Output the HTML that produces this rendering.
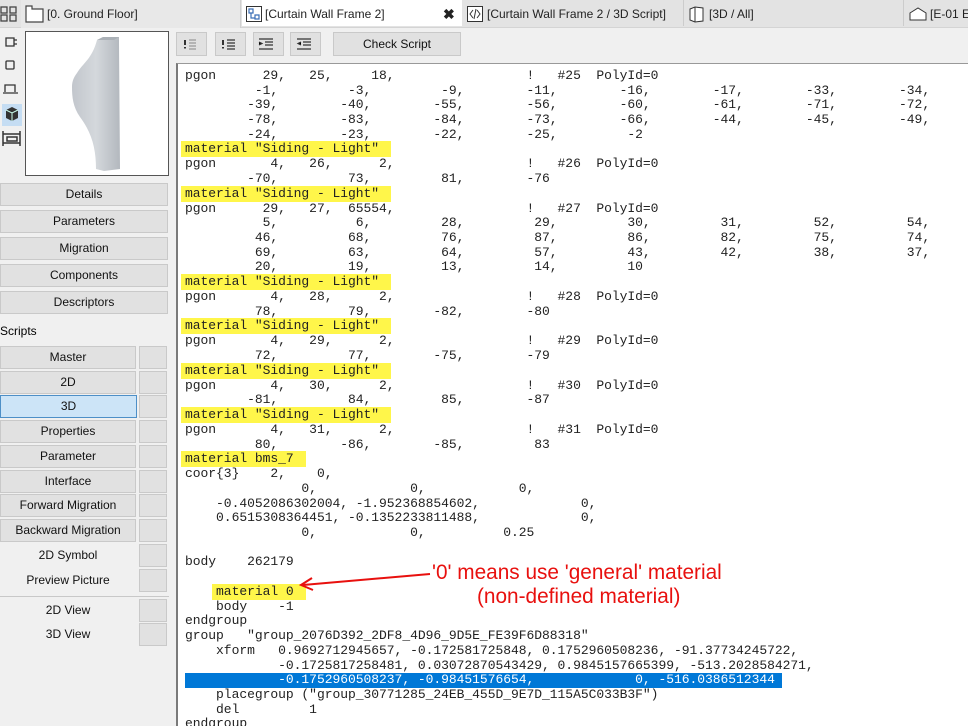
<!DOCTYPE html>
<html><head><meta charset="utf-8"><style>
*{margin:0;padding:0;box-sizing:border-box}
body{width:968px;height:726px;overflow:hidden;background:#f0f0f0;font-family:"Liberation Sans",sans-serif;font-size:12px;color:#000;position:relative}
.abs{position:absolute}
.tabbar{left:0;top:0;width:968px;height:28px;background:#e3e3e3;border-bottom:1px solid #d4d4d4}
.tab{position:absolute;top:0;height:28px;line-height:28px;font-size:12px;color:#222;white-space:nowrap}
.btn{position:absolute;background:#e1e1e1;border:1px solid #c9c9c9;text-align:center;font-size:12px;line-height:21px;height:23px;color:#111}
.sq{position:absolute;left:139px;width:28px;height:23px;background:#e1e1e1;border:1px solid #c9c9c9}
.code{left:176px;top:63px;width:792px;height:663px;background:#fff;border-left:2px solid #7a7a7a;border-top:1px solid #999;overflow:hidden}
pre{position:absolute;left:7px;top:5px;font-family:"Liberation Mono",monospace;font-size:13px;line-height:14.67px;color:#222;letter-spacing:-0.04px}
.hl{background:#fff64a;display:inline-block;margin-left:-4px;padding:0 12px 0 4px;height:16px;line-height:16px;margin-top:-1px;vertical-align:top}
.sel{background:#0078d7;color:#fff;display:inline-block;width:597px;vertical-align:top}
.tb{position:absolute;top:32px;width:31px;height:24px;background:#e1e1e1;border:1px solid #c9c9c9}
.ann{color:#e8100e;font-family:"Liberation Sans Narrow","Liberation Sans",sans-serif;font-size:21px;position:absolute;white-space:nowrap;transform:scaleX(0.99);transform-origin:left}
</style></head><body>
<div class="abs tabbar"></div>
<svg class="abs" style="left:0;top:6px" width="18" height="16"><g fill="none" stroke="#444" stroke-width="1.3"><rect x="1" y="1" width="6" height="6"/><rect x="10" y="1" width="6" height="6"/><rect x="1" y="9" width="6" height="6"/><rect x="10" y="9" width="6" height="6"/></g></svg>
<div class="abs" style="left:21px;top:0;width:220px;height:28px;background:#e8e8e8;border-right:1px solid #d0d0d0"></div>
<svg class="abs" style="left:25px;top:5px" width="20" height="18"><path d="M1 1h6v3h11v13H1z" fill="#fff" stroke="#444" stroke-width="1.2"/></svg>
<div class="tab" style="left:47px">[0. Ground Floor]</div>
<div class="abs" style="left:242px;top:0;width:220px;height:26px;background:#fff"></div>
<svg class="abs" style="left:246px;top:6px" width="16" height="16"><rect x="0.5" y="0.5" width="15" height="15" fill="#fff" stroke="#333"/><path d="M3 3h4v4H3zM9 9h4v4H9zM5 7v5h4" fill="none" stroke="#3b6fb6" stroke-width="1.2"/></svg>
<div class="tab" style="left:265px">[Curtain Wall Frame 2]</div>
<div class="tab" style="left:443px;font-weight:bold;font-size:14px">✖</div>
<svg class="abs" style="left:467px;top:6px" width="16" height="16"><rect x="0.5" y="0.5" width="15" height="15" fill="#fff" stroke="#333"/><path d="M6 4L3 8l3 4M10 4l3 4-3 4M9 3L7 13" fill="none" stroke="#333"/></svg>
<div class="tab" style="left:487px">[Curtain Wall Frame 2 / 3D Script]</div>
<div class="abs" style="left:683px;top:0;width:1px;height:26px;background:#ccc"></div>
<svg class="abs" style="left:689px;top:6px" width="16" height="17"><path d="M1 3l5-2 8 1v13l-8 1-5-2z" fill="#fff" stroke="#333"/><path d="M6 1v15" stroke="#333"/></svg>
<div class="tab" style="left:709px">[3D / All]</div>
<div class="abs" style="left:903px;top:0;width:1px;height:26px;background:#ccc"></div>
<svg class="abs" style="left:909px;top:7px" width="18" height="14"><path d="M1 6l8-5 8 5v7H1z" fill="#fff" stroke="#333"/></svg>
<div class="tab" style="left:930px">[E-01 E</div>

<svg class="abs" style="left:2px;top:34px" width="20" height="115"><g fill="none" stroke="#333" stroke-width="1.3"><path d="M4 4h8v8H4zM12 6h3M12 10h3"/><rect x="4" y="27" width="8" height="8" rx="1"/><path d="M3 58v-7h10v7M1 59h15"/></g>
<rect x="0" y="70" width="20" height="22" fill="#c5ddf3"/><path d="M10 73l6 3v8l-6 3-6-3v-8z" fill="#333"/><path d="M4 76l6 3 6-3M10 79v8" stroke="#cfe" fill="none"/>
<path d="M1 97v15M18 97v15M1 100h17M1 109h17M5 103h10v4H5z" stroke="#333" fill="none" stroke-width="1.5"/></svg>
<div class="abs" style="left:25px;top:31px;width:144px;height:145px;background:#fff;border:1px solid #555"></div>
<svg class="abs" style="left:26px;top:32px" width="142" height="143"><defs><linearGradient id="g" x1="0" x2="1"><stop offset="0" stop-color="#c2c6cc"/><stop offset="0.5" stop-color="#d4d8dc"/><stop offset="1" stop-color="#b3b8be"/></linearGradient></defs>
<path d="M71 8l6-3 16 0 0 6 1 126-16 2-8-2c0-20-4-36-16-52-7-10-8-20-8-30 0-6 2-10 5-14 6-10 15-14 20-33z" fill="url(#g)"/>
<path d="M71 8l6-3h16l-5 3z" fill="#aab0b6"/></svg>

<div class="btn" style="left:0;top:183px;width:168px">Details</div>
<div class="btn" style="left:0;top:210px;width:168px">Parameters</div>
<div class="btn" style="left:0;top:237px;width:168px">Migration</div>
<div class="btn" style="left:0;top:264px;width:168px">Components</div>
<div class="btn" style="left:0;top:291px;width:168px">Descriptors</div>
<div class="abs" style="left:0;top:324px">Scripts</div>
<div class="btn" style="left:0;top:346px;width:136px">Master</div><div class="sq" style="top:346px"></div>
<div class="btn" style="left:0;top:371px;width:136px">2D</div><div class="sq" style="top:371px"></div>
<div class="btn" style="left:0;top:395px;width:137px;background:#cce4f7;border-color:#4d8fc7">3D</div><div class="sq" style="top:395px"></div>
<div class="btn" style="left:0;top:420px;width:136px">Properties</div><div class="sq" style="top:420px"></div>
<div class="btn" style="left:0;top:445px;width:136px">Parameter</div><div class="sq" style="top:445px"></div>
<div class="btn" style="left:0;top:470px;width:136px">Interface</div><div class="sq" style="top:470px"></div>
<div class="btn" style="left:0;top:494px;width:136px">Forward Migration</div><div class="sq" style="top:494px"></div>
<div class="btn" style="left:0;top:519px;width:136px">Backward Migration</div><div class="sq" style="top:519px"></div>
<div class="btn" style="left:0;top:544px;width:136px;background:transparent;border-color:transparent">2D Symbol</div><div class="sq" style="top:544px"></div>
<div class="btn" style="left:0;top:569px;width:136px;background:transparent;border-color:transparent">Preview Picture</div><div class="sq" style="top:569px"></div>
<div class="abs" style="left:0;top:596px;width:169px;height:1px;background:#c8c8c8"></div>
<div class="btn" style="left:0;top:599px;width:136px;background:transparent;border-color:transparent">2D View</div><div class="sq" style="top:599px"></div>
<div class="btn" style="left:0;top:623px;width:136px;background:transparent;border-color:transparent">3D View</div><div class="sq" style="top:623px"></div>

<div class="tb" style="left:176px"></div><div class="tb" style="left:215px"></div><div class="tb" style="left:253px"></div><div class="tb" style="left:290px"></div>
<svg class="abs" style="left:176px;top:32px" width="150" height="24"><g stroke="#333" stroke-width="1.2"><path d="M9 8v5M9 15v1.5" stroke-width="2"/><path d="M13 8h7M13 11h7M13 14h7M13 17h7" stroke="#999"/>
<path d="M47 8v5M47 15v1.5" stroke-width="2"/><path d="M51 8h8M51 11h8M51 14h8M51 17h8"/>
<path d="M83 7h14M89 10h8M89 13h8M83 17h14M83 10l3 1.5-3 1.5"/>
<path d="M121 7h14M127 10h8M127 13h8M121 17h14M125 10l-3 1.5 3 1.5"/></g></svg>
<div class="btn" style="left:333px;top:32px;width:128px;height:24px;line-height:22px">Check Script</div>

<div class="abs code">
<pre>pgon      29,   25,     18,                 !   #25  PolyId=0
         -1,         -3,         -9,        -11,        -16,        -17,        -33,        -34,
        -39,        -40,        -55,        -56,        -60,        -61,        -71,        -72,
        -78,        -83,        -84,        -73,        -66,        -44,        -45,        -49,
        -24,        -23,        -22,        -25,         -2
<span class="hl">material "Siding - Light"</span>
pgon       4,   26,      2,                 !   #26  PolyId=0
        -70,         73,         81,        -76
<span class="hl">material "Siding - Light"</span>
pgon      29,   27,  65554,                 !   #27  PolyId=0
          5,          6,         28,         29,         30,         31,         52,         54,
         46,         68,         76,         87,         86,         82,         75,         74,
         69,         63,         64,         57,         43,         42,         38,         37,
         20,         19,         13,         14,         10
<span class="hl">material "Siding - Light"</span>
pgon       4,   28,      2,                 !   #28  PolyId=0
         78,         79,        -82,        -80
<span class="hl">material "Siding - Light"</span>
pgon       4,   29,      2,                 !   #29  PolyId=0
         72,         77,        -75,        -79
<span class="hl">material "Siding - Light"</span>
pgon       4,   30,      2,                 !   #30  PolyId=0
        -81,         84,         85,        -87
<span class="hl">material "Siding - Light"</span>
pgon       4,   31,      2,                 !   #31  PolyId=0
         80,        -86,        -85,         83
<span class="hl">material bms_7</span>
coor{3}    2,    0,
               0,            0,            0,
    -0.4052086302004, -1.952368854602,             0,
    0.6515308364451, -0.1352233811488,             0,
               0,            0,          0.25

body    262179

    <span class="hl">material 0</span>
    body    -1
endgroup
group   "group_2076D392_2DF8_4D96_9D5E_FE39F6D88318"
    xform   0.9692712945657, -0.172581725848, 0.1752960508236, -91.37734245722,
            -0.1725817258481, 0.03072870543429, 0.9845157665399, -513.2028584271,
<span class="sel">            -0.1752960508237, -0.98451576654,             0, -516.0386512344</span>
    placegroup ("group_30771285_24EB_455D_9E7D_115A5C033B3F")
    del         1
endgroup</pre>
</div>

<svg class="abs" style="left:295px;top:565px" width="140" height="30"><path d="M135 9L8 20" stroke="#e8100e" stroke-width="2"/><path d="M17 13L6 20l12 5" fill="none" stroke="#e8100e" stroke-width="2"/></svg>
<div class="ann" style="left:432px;top:561px">'0' means use 'general' material</div>
<div class="ann" style="left:477px;top:585px">(non-defined material)</div>
</body></html>
